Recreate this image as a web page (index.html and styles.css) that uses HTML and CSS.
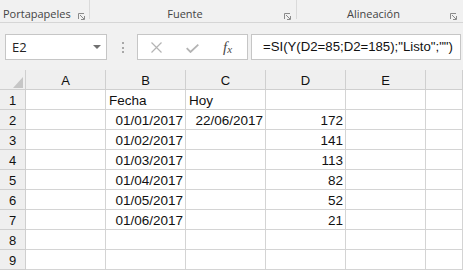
FILE: index.html
```html
<!DOCTYPE html>
<html lang="es">
<head>
<meta charset="utf-8">
<link rel="stylesheet" href="styles.css">
</head>
<body>
<div class="ribbon">
  <div class="group g1">
    <span class="label">Portapapeles</span>
    <svg class="launch" width="7" height="7" viewBox="0 0 7 7"><path d="M0.5 6 V0.5 H6" fill="none" stroke="#8a8a8a"/><path d="M2 2 L6 6 M3 6.5 H6.5 V3" fill="none" stroke="#8a8a8a"/></svg>
  </div>
  <div class="group g2">
    <span class="label">Fuente</span>
    <svg class="launch" width="7" height="7" viewBox="0 0 7 7"><path d="M0.5 6 V0.5 H6" fill="none" stroke="#8a8a8a"/><path d="M2 2 L6 6 M3 6.5 H6.5 V3" fill="none" stroke="#8a8a8a"/></svg>
  </div>
  <div class="group g3">
    <span class="label">Alineación</span>
    <svg class="launch" width="7" height="7" viewBox="0 0 7 7"><path d="M0.5 6 V0.5 H6" fill="none" stroke="#8a8a8a"/><path d="M2 2 L6 6 M3 6.5 H6.5 V3" fill="none" stroke="#8a8a8a"/></svg>
  </div>
</div>
<div class="fbar">
  <div class="namebox">
    <span class="nb-text">E2</span>
    <svg class="tri" width="8" height="4" viewBox="0 0 8 4"><path d="M0 0 H8 L4 4 Z" fill="#707070"/></svg>
  </div>
  <div class="dots"><i></i><i></i><i></i></div>
  <div class="btns">
    <svg class="bx" width="11" height="11" viewBox="0 0 11 11"><path d="M0.5 0.5 L10.5 10.5 M10.5 0.5 L0.5 10.5" stroke="#b4b4b4" stroke-width="1.2" fill="none"/></svg>
    <svg class="bc" width="13" height="9" viewBox="0 0 13 9"><path d="M0.7 4.2 L4.5 8 L12.3 0.7" stroke="#b4b4b4" stroke-width="1.8" fill="none"/></svg>
    <span class="fx">f<span class="fxx">x</span></span>
  </div>
  <div class="formula">=SI(Y(D2=85;D2=185);"Listo";"")</div>
</div>
<div class="sheet">
  <div class="hd corner"><svg width="10" height="11" viewBox="0 0 10 11"><path d="M10 0 V11 H0 Z" fill="#c6c6c6"/></svg></div>
  <div class="hd ch">A</div><div class="hd ch">B</div><div class="hd ch">C</div><div class="hd ch">D</div><div class="hd ch">E</div><div class="hd ch"></div>

  <div class="hd rh">1</div><div class="c"></div><div class="c l">Fecha</div><div class="c l">Hoy</div><div class="c"></div><div class="c"></div><div class="c"></div>
  <div class="hd rh">2</div><div class="c"></div><div class="c r">01/01/2017</div><div class="c r">22/06/2017</div><div class="c r">172</div><div class="c"></div><div class="c"></div>
  <div class="hd rh">3</div><div class="c"></div><div class="c r">01/02/2017</div><div class="c"></div><div class="c r">141</div><div class="c"></div><div class="c"></div>
  <div class="hd rh">4</div><div class="c"></div><div class="c r">01/03/2017</div><div class="c"></div><div class="c r">113</div><div class="c"></div><div class="c"></div>
  <div class="hd rh">5</div><div class="c"></div><div class="c r">01/04/2017</div><div class="c"></div><div class="c r">82</div><div class="c"></div><div class="c"></div>
  <div class="hd rh">6</div><div class="c"></div><div class="c r">01/05/2017</div><div class="c"></div><div class="c r">52</div><div class="c"></div><div class="c"></div>
  <div class="hd rh">7</div><div class="c"></div><div class="c r">01/06/2017</div><div class="c"></div><div class="c r">21</div><div class="c"></div><div class="c"></div>
  <div class="hd rh">8</div><div class="c"></div><div class="c"></div><div class="c"></div><div class="c"></div><div class="c"></div><div class="c"></div>
  <div class="hd rh">9</div><div class="c"></div><div class="c"></div><div class="c"></div><div class="c"></div><div class="c"></div><div class="c"></div>
</div>
</body>
</html>
```

FILE: styles.css
```css
* { box-sizing: border-box; }
html, body { margin: 0; padding: 0; }
body {
  width: 463px;
  height: 270px;
  overflow: hidden;
  background: #ffffff;
  font-family: "Liberation Sans", Arial, sans-serif;
}

/* Ribbon */
.ribbon {
  display: flex;
  height: 23px;
  background: #f1f1f1;
  border-bottom: 1px solid #d6d6d6;
}
.group {
  display: flex;
  height: 19px;
  align-items: flex-start;
}
.g1 { width: 90px; border-right: 1px solid #dadada; padding-left: 3px; }
.g2 { width: 207px; border-right: 1px solid #dadada; }
.g3 { flex: 1; }
.label {
  font-family: "Open Sans", sans-serif;
  font-size: 11px;
  line-height: 15px;
  padding-top: 6px;
  color: #444444;
  white-space: nowrap;
}
.g1 .label { flex: 1; }
.g2 .label, .g3 .label { flex: 1; text-align: center; padding-left: 0; }
.g2 .label { padding-right: 4px; }
.launch { margin-top: 13px; flex: none; }
.g1 .launch { margin-right: 4px; }
.g2 .launch { margin-right: 5px; }
.g3 .launch { margin-right: 6px; }

/* Formula bar */
.fbar {
  display: flex;
  align-items: flex-start;
  height: 47px;
  background: #f1f1f1;
  padding-top: 11px;
}
.namebox {
  margin-left: 5px;
  width: 102px;
  height: 26px;
  background: #fff;
  border: 1px solid #c6c6c6;
  display: flex;
  align-items: center;
  padding-left: 6px;
  padding-right: 5px;
}
.nb-text {
  flex: 1;
  font-family: "Open Sans", sans-serif;
  font-size: 13px;
  color: #222;
  line-height: 16px;
}
.tri { flex: none; }
.dots {
  margin-left: 15px;
  margin-top: 8px;
  display: flex;
  flex-direction: column;
  gap: 2.5px;
}
.dots i {
  display: block;
  width: 2px;
  height: 2px;
  background: #a8a8a8;
}
.btns {
  margin-left: 13px;
  width: 111px;
  height: 26px;
  background: #fff;
  border: 1px solid #c6c6c6;
  display: flex;
  align-items: center;
  padding-left: 13px;
}
.bx { flex: none; }
.bc { flex: none; margin-left: 24px; margin-top: 2px; }
.fx {
  margin-left: 24px;
  font-family: "Liberation Serif", serif;
  font-style: italic;
  font-size: 15px;
  color: #4a4a4a;
  line-height: 14px;
}
.fxx { font-size: 11px; position: relative; top: 1px; }
.formula {
  margin-left: 3px;
  width: 210px;
  height: 26px;
  background: #fff;
  border: 1px solid #c6c6c6;
  padding-left: 11px;
  font-family: "Liberation Sans", Arial, sans-serif;
  font-size: 13.2px;
  line-height: 24px;
  color: #111;
  white-space: nowrap;
  overflow: hidden;
}

/* Sheet */
.sheet {
  display: grid;
  grid-template-columns: 26px repeat(5, 80px) 1fr;
  grid-auto-rows: 20px;
}
.sheet > div {
  border-right: 1px solid #d4d4d4;
  border-bottom: 1px solid #d4d4d4;
  display: flex;
  align-items: flex-end;
  font-size: 13.5px;
  line-height: 16px;
  white-space: nowrap;
  color: #111;
}
.hd {
  background: #efefef;
  justify-content: center;
  color: #262626;
  font-size: 13px !important;
}
.sheet > .hd { border-color: #cfcfcf; }
.corner { justify-content: flex-end !important; padding: 0 2px 1px 0; }
.corner svg { display: block; }
.c.l { padding-left: 3px; }
.c.r { justify-content: flex-end; padding-right: 2px; }
```
